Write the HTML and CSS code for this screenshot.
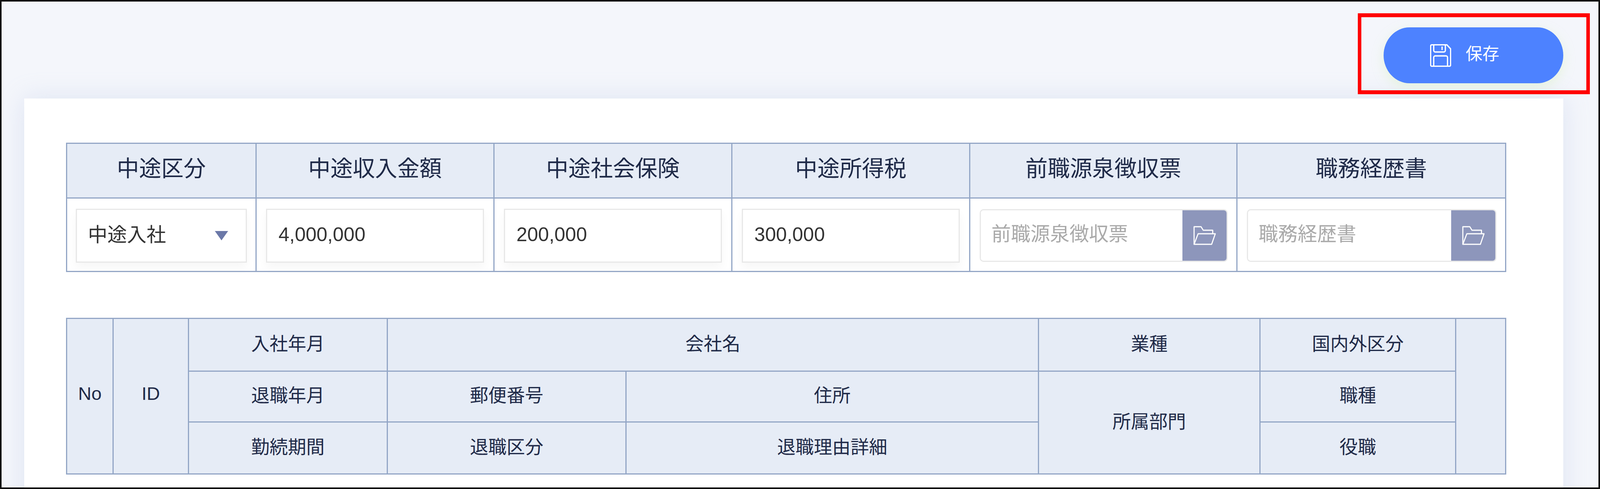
FILE: index.html
```html
<!DOCTYPE html>
<html lang="ja">
<head>
    <meta charset="UTF-8">
    <meta name="viewport" content="width=device-width, initial-scale=1.0">
    <title>中途入社</title>
    <link rel="stylesheet" href="styles.css">
</head>
<body>
    <div class="frame">
        <div class="toolbar">
            <div class="save-wrap">
                <button class="save-button" type="button">
                    <svg class="save-icon" viewBox="0 0 58 58" preserveAspectRatio="none" fill="none" stroke="#fff" stroke-width="3.5">
                        <path d="M5 1.5H46L56.5 12V53a3.5 3.5 0 0 1-3.5 3.5H5A3.5 3.5 0 0 1 1.5 53V5A3.5 3.5 0 0 1 5 1.5Z"/>
                        <path d="M10 2V16a4 4 0 0 0 4 4H38a4 4 0 0 0 4-4V2"/>
                        <path d="M33 6V15"/>
                        <path d="M10 56V34a4 4 0 0 1 4-4H44a4 4 0 0 1 4 4V56"/>
                    </svg>
                    <span>保存</span>
                </button>
                <div class="highlight"></div>
            </div>
        </div>
        <div class="card">
            <table class="grid summary">
                <colgroup>
                    <col class="c1"><col class="c2"><col class="c2"><col class="c2"><col class="c3"><col class="c4">
                </colgroup>
                <tr class="head-row">
                    <th>中途区分</th>
                    <th>中途収入金額</th>
                    <th>中途社会保険</th>
                    <th>中途所得税</th>
                    <th>前職源泉徴収票</th>
                    <th>職務経歴書</th>
                </tr>
                <tr class="input-row">
                    <td>
                        <div class="select-box">
                            <span>中途入社</span>
                            <i class="caret"></i>
                        </div>
                    </td>
                    <td><input class="text-input" type="text" value="4,000,000"></td>
                    <td><input class="text-input" type="text" value="200,000"></td>
                    <td><input class="text-input" type="text" value="300,000"></td>
                    <td>
                        <div class="file-box">
                            <input type="text" placeholder="前職源泉徴収票">
                            <button class="file-button" type="button">
                                <svg class="folder-icon" viewBox="0 0 62 49" preserveAspectRatio="none" fill="none" stroke="#fff" stroke-width="3" stroke-linejoin="round">
                                    <path d="M2 47V2H21L27 11H53V20"/>
                                    <path d="M2 47L13 20H60L50 47Z"/>
                                </svg>
                            </button>
                        </div>
                    </td>
                    <td>
                        <div class="file-box">
                            <input type="text" placeholder="職務経歴書">
                            <button class="file-button" type="button">
                                <svg class="folder-icon" viewBox="0 0 62 49" preserveAspectRatio="none" fill="none" stroke="#fff" stroke-width="3" stroke-linejoin="round">
                                    <path d="M2 47V2H21L27 11H53V20"/>
                                    <path d="M2 47L13 20H60L50 47Z"/>
                                </svg>
                            </button>
                        </div>
                    </td>
                </tr>
            </table>

            <table class="grid history">
                <colgroup>
                    <col class="h1"><col class="h2"><col class="h3"><col class="h4"><col class="h5"><col class="h6"><col class="h7"><col class="h8">
                </colgroup>
                <tr class="row-a">
                    <th rowspan="3">No</th>
                    <th rowspan="3">ID</th>
                    <th>入社年月</th>
                    <th colspan="2">会社名</th>
                    <th>業種</th>
                    <th>国内外区分</th>
                    <th rowspan="3"></th>
                </tr>
                <tr class="row-b">
                    <th>退職年月</th>
                    <th>郵便番号</th>
                    <th>住所</th>
                    <th rowspan="2">所属部門</th>
                    <th>職種</th>
                </tr>
                <tr class="row-c">
                    <th>勤続期間</th>
                    <th>退職区分</th>
                    <th>退職理由詳細</th>
                    <th>役職</th>
                </tr>
            </table>
        </div>
    </div>
</body>
</html>
```

FILE: styles.css
```css
html, body {
    margin: 0;
    padding: 0;
    height: 100%;
    overflow: hidden;
}
body {
    font-family: "Liberation Sans", "Noto Sans CJK JP", sans-serif;
    color: #333;
}
.frame {
    box-sizing: border-box;
    height: 1251px;
    border: 4px solid #111;
    background-color: #f4f6fb;
    padding: 0 90px 0 58px;
    overflow: hidden;
}
.toolbar {
    height: 248px;
    display: flex;
    justify-content: flex-end;
    padding-top: 66px;
    box-sizing: border-box;
}
.save-wrap {
    position: relative;
    height: 143px;
}
.save-button {
    width: 460px;
    height: 143px;
    border: none;
    border-radius: 67px / 72px;
    background-color: #4d82ff;
    color: #fff;
    font-family: inherit;
    font-size: 43px;
    display: flex;
    align-items: center;
    padding: 0 0 0 119px;
    gap: 37px;
    box-shadow: 0 10px 30px rgba(205, 240, 170, 0.35);
}
.save-button span {
    padding-bottom: 16px;
}
.save-icon {
    width: 54px;
    height: 58px;
}
.highlight {
    position: absolute;
    top: -36px;
    bottom: -28px;
    left: -66px;
    right: -68px;
    border: 10px solid #f00;
    border-left-width: 9px;
    border-right-width: 9px;
}
.card {
    height: 1000px;
    background-color: #fff;
    padding: 113px 148px 0 107px;
    box-shadow: 0 0 60px rgba(170, 185, 225, 0.3);
}
.grid {
    width: 3684px;
    table-layout: fixed;
    border-collapse: collapse;
    border: 3px solid #93a6c6;
}
.grid th, .grid td {
    border: 3px solid #93a6c6;
    padding: 0;
    text-align: center;
    vertical-align: middle;
}
.grid td {
    padding-top: 4px;
}
.grid th {
    background-color: #e6ecf6;
    font-weight: 400;
    color: #1f2a48;
}
.summary th {
    font-size: 57px;
    padding-bottom: 22px;
}
.history {
    margin-top: 117px;
}
.history th {
    font-size: 47px;
    padding-bottom: 14px;
}
.c1 { width: 485px; }
.c2 { width: 609px; }
.c3 { width: 684px; }
.c4 { width: 688px; }
.h1 { width: 119px; }
.h2 { width: 193px; }
.h3 { width: 509px; }
.h4 { width: 611px; }
.h5 { width: 1056px; }
.h6 { width: 567px; }
.h7 { width: 501px; }
.h8 { width: 128px; }
.head-row { height: 140px; }
.input-row { height: 188px; }
.row-a { height: 135px; }
.row-b { height: 130px; }
.row-c { height: 133px; }
.select-box, .text-input, .file-box {
    box-sizing: border-box;
    height: 138px;
    border: 3px solid #e8e8e8;
    background-color: #fff;
    box-shadow: 0 14px 24px rgba(0, 0, 0, 0.035);
    font-family: inherit;
    font-size: 50px;
    color: #333;
}
.select-box {
    margin: 0 22px;
    display: flex;
    align-items: center;
    justify-content: space-between;
    padding: 0 45px 0 28px;
    font-size: 50px;
}
.select-box span {
    padding-bottom: 14px;
}
.caret {
    width: 0;
    height: 0;
    border-left: 17px solid transparent;
    border-right: 17px solid transparent;
    border-top: 24px solid #6b78a8;
}
.text-input {
    display: block;
    width: 558px;
    margin: 0 auto;
    padding: 0 0 6px 29px;
    outline: none;
}
.file-box {
    height: 135px;
    margin: 0 22px 0 24px;
    display: flex;
    border-radius: 10px;
    overflow: hidden;
    box-shadow: none;
}
.file-box input {
    flex: 1;
    min-width: 0;
    border: none;
    outline: none;
    padding: 0 0 8px 27px;
    font-family: inherit;
    font-size: 50px;
    color: #333;
}
.file-box input::placeholder {
    color: #aaa;
    opacity: 1;
}
.file-button {
    width: 113px;
    border: none;
    padding: 0;
    background-color: #8d96bb;
    display: flex;
    align-items: center;
    justify-content: center;
}
.folder-icon {
    width: 58px;
    height: 49px;
}
```
